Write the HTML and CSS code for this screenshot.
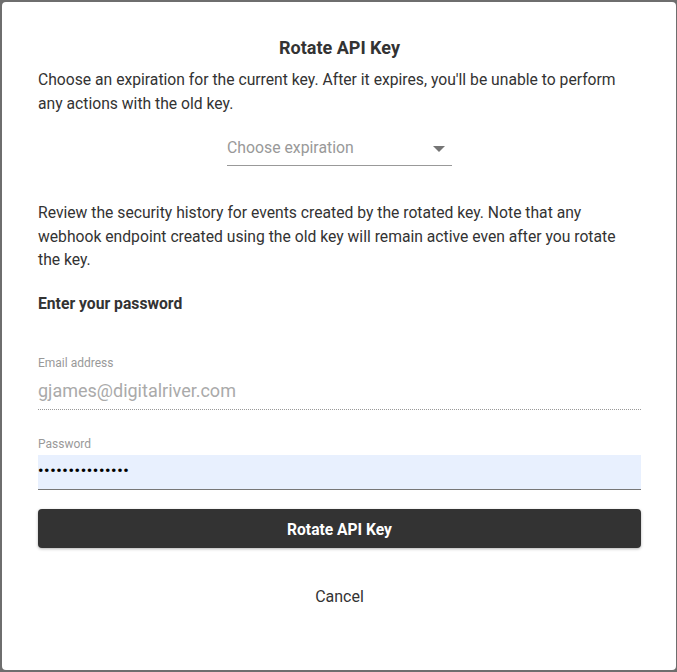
FILE: index.html
```html
<!DOCTYPE html>
<html>
<head>
<meta charset="utf-8">
<link rel="stylesheet" href="styles.css">
</head>
<body>
<div class="dialog">
  <h1 class="title">Rotate API Key</h1>
  <p class="text">Choose an expiration for the current key. After it expires, you'll be unable to perform any actions with the old key.</p>
  <div class="select-wrap">
    <div class="select">
      <span class="placeholder">Choose expiration</span>
      <span class="arrow"></span>
    </div>
  </div>
  <p class="text second">Review the security history for events created by the rotated key. Note that any webhook endpoint created using the old key will remain active even after you rotate the key.</p>
  <h2 class="subhead">Enter your password</h2>
  <div class="field email">
    <label class="label">Email address</label>
    <div class="value">gjames@digitalriver.com</div>
  </div>
  <div class="field password">
    <label class="label">Password</label>
    <div class="value pw">•••••••••••••••</div>
  </div>
  <button class="primary">Rotate API Key</button>
  <button class="cancel">Cancel</button>
</div>
</body>
</html>
```
FILE: styles.css
```css
html, body {
  margin: 0;
  padding: 0;
  height: 100%;
}
body {
  background: #6e6e6e;
  font-family: Roboto, "Liberation Sans", sans-serif;
  color: #333;
  padding: 2px 1px 2px 2px;
  box-sizing: border-box;
}
.dialog {
  background: #fff;
  border-radius: 4px;
  height: 100%;
  box-sizing: border-box;
  padding: 36px 35px 0 36px;
  display: flex;
  flex-direction: column;
}
.title {
  margin: 0;
  font-size: 18px;
  font-weight: 700;
  text-align: center;
  line-height: 20px;
  color: #333;
}
.text {
  margin: 0;
  font-size: 15.7px;
  line-height: 23.5px;
  color: #333;
}
.title + .text {
  margin-top: 10px;
}
.select-wrap {
  display: flex;
  justify-content: center;
  margin-top: 20px;
}
.select {
  width: 225px;
  height: 31px;
  border-bottom: 1px solid #999;
  display: flex;
  align-items: center;
  justify-content: space-between;
  box-sizing: border-box;
  padding: 0 7px 6px 0;
}
.placeholder {
  font-size: 15.8px;
  color: #999;
}
.arrow {
  width: 0;
  height: 0;
  border-left: 6px solid transparent;
  border-right: 6px solid transparent;
  border-top: 6px solid #757575;
  margin-top: 4px;
}
.second {
  margin-top: 35px;
}
.subhead {
  margin: 22px 0 0;
  font-size: 15.7px;
  font-weight: 700;
  line-height: 20px;
  color: #333;
}
.field {
  display: flex;
  flex-direction: column;
}
.email {
  margin-top: 42px;
}
.password {
  margin-top: 27px;
}
.label {
  font-size: 12px;
  color: #999;
  line-height: 14px;
}
.value {
  font-size: 18px;
  color: #aaa;
  line-height: 22px;
}
.email .value {
  margin-top: 10px;
  padding-bottom: 7px;
  border-bottom: 1px dotted #999;
}
.pw {
  margin-top: 4px;
  background: #e8f0fe;
  color: #000;
  height: 35px;
  box-sizing: border-box;
  line-height: 33px;
  font-size: 15px;
  font-weight: 700;
  letter-spacing: 0.7px;
  border-bottom: 1px solid #777;
  padding-left: 0;
}
.primary {
  margin-top: 19px;
  height: 39px;
  padding: 3px 0 0;
  border: none;
  border-radius: 4px;
  background: #333;
  color: #fff;
  font-family: inherit;
  font-size: 15.6px;
  font-weight: 700;
  box-shadow: 0 1px 3px rgba(0,0,0,0.3);
  cursor: pointer;
}
.cancel {
  margin: 33px auto 0;
  background: none;
  border: none;
  font-family: inherit;
  font-size: 16px;
  color: #333;
  padding: 6px 16px;
}
```
